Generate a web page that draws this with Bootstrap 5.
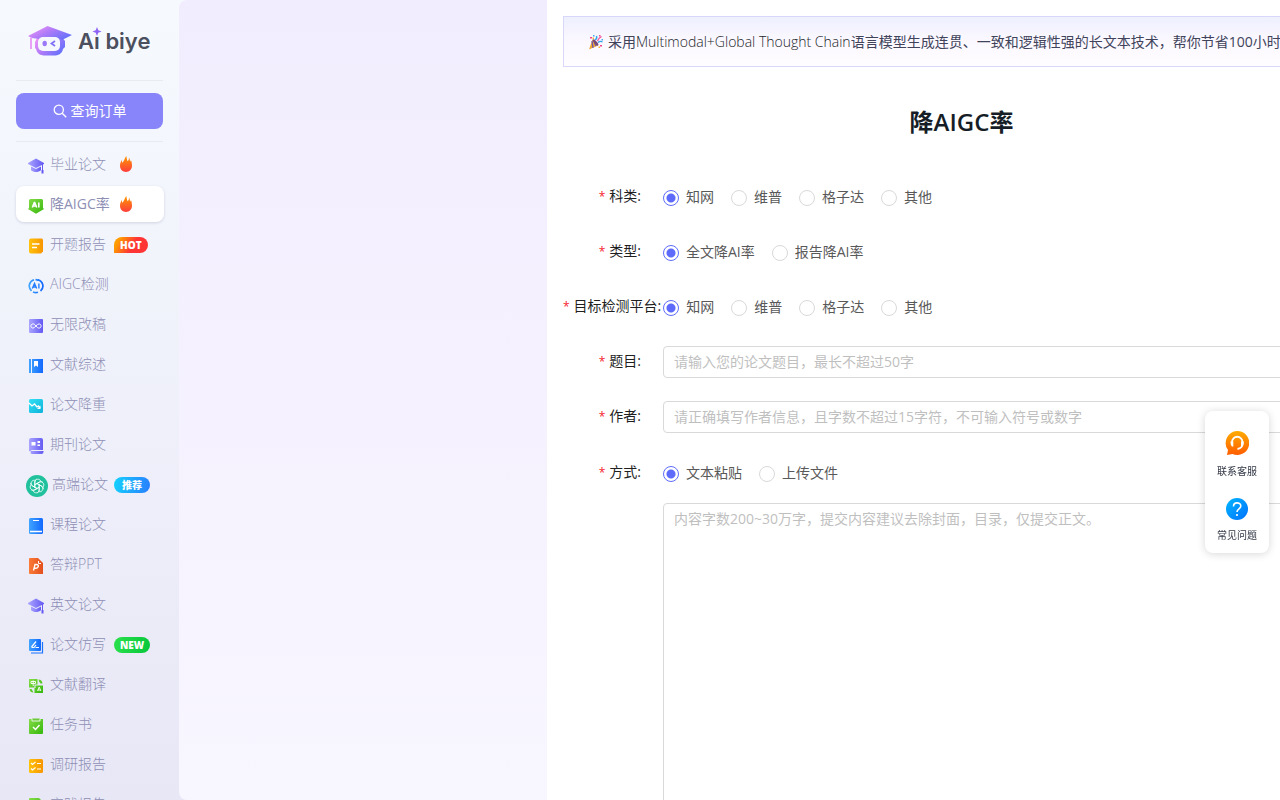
<!DOCTYPE html>
<html lang="zh-CN">
<head>
<meta charset="utf-8">
<meta name="viewport" content="width=device-width, initial-scale=1">
<title>Ai biye - 降AIGC率</title>
<link href="https://cdn.jsdelivr.net/npm/bootstrap@5.3.0/dist/css/bootstrap.min.css" rel="stylesheet">
<style>
  body { font-family: "Open Sans", "Noto Sans CJK SC", sans-serif; font-size: 14px; line-height: 22px; color: #1f1f1f; background: linear-gradient(#f6fafe, #e8e7f6); }
  .side-bar { width: 179px; padding: 0 16px; }
  .brand-row { height: 81px; padding: 1px 0 0 12px; border-bottom: 1px solid #e9ebf2; }
  .brand-name { margin-left: 6px; font: 600 22px/32px Inter, sans-serif; color: #4c4f5e; }
  .brand-star { position: absolute; left: 13px; top: 1px; }
  .order-box { padding: 12px 0; border-bottom: 1px solid #e7eaf2; }
  .order-btn { height: 36px; border-radius: 8px; background: #8884fa; color: #fff; font-size: 14px; line-height: 22px; }
  .order-btn:hover { background: #7975f0; color: #fff; }
  .side-link { height: 36px; margin-bottom: 4px; padding: 0 0 0 12px; border-radius: 8px; color: #8e8fb5; width: 148px; text-decoration: none; white-space: nowrap; font-weight: 300; }
  .side-link.active { background: #fff; box-shadow: 0 1px 3px rgba(60,60,110,.18); font-weight: 400; }
  .side-link > svg:first-child { margin-right: 6px; margin-top: 3px; flex: none; }
  .side-link > .gpt-icon:first-child { margin-left: -2px; margin-right: 4px; }
  .flame-icon { margin-left: 14px; }
  .active .flame-icon { margin-left: 10px; }
  .tag-pill { height: 16px; margin: 1px 0 0 8px; padding: 0 6px; border-radius: 8px; color: #fff; font-size: 10px; line-height: 16px; font-weight: 800; }
  .tag-hot { background: linear-gradient(120deg, #ff9d00 15%, #ff3535 55%); border-bottom-left-radius: 0; }
  .tag-rec { background: linear-gradient(100deg, #14d2ff, #287dff); padding: 0 8px; margin-left: 6px; }
  .tag-new { background: linear-gradient(100deg, #2be04c, #07c73b); }
  .blank-pane { flex: 1 0 368px; background: linear-gradient(#f2edfe, #f8f6ff); border-radius: 8px 0 0 8px; }
  .work-pane { flex: 0 0 829px; padding: 16px; background: #fff; }
  .notice-bar { height: 51px; border: 1px solid #d9d8fb; background: linear-gradient(#eef0fe, #fbf8ff 50%, #fffdff); color: #40435a; white-space: nowrap; padding-left: 24px; }
  .page-title { font-size: 24px; line-height: 32px; font-weight: 600; margin: 39px 0 43px; color: #161d26; }
  .form-line { display: flex; height: 32px; margin-bottom: 23px; }
  .form-line.tight { padding-top: 1px; margin-bottom: 15px; }
  .form-line.tall { height: auto; }
  .line-label { flex: 0 0 100px; padding-right: 22px; text-align: right; line-height: 30px; white-space: nowrap; }
  .line-label.wide { padding-right: 2px; }
  .line-label::before { content: "*"; color: #f5222d; margin-right: 4px; font-size: 12px; line-height: 1; }
  .line-label.plain::before { content: none; }
  .opt { display: flex; align-items: center; gap: 7px; margin-right: 17px; color: #595959; line-height: 30px; }
  .opt .form-check-input { width: 16px; height: 16px; margin: 2px 0 0; border: 1px solid #d9d9d9; background: #fff; flex: none; }
  .opt .form-check-input:checked { border-color: #5e6bfa; background: radial-gradient(circle, #5e6bfa 4px, #fff 5px); }
  .field { font-size: 14px; line-height: 22px; padding: 3px 10px 5px; border: 1px solid #d9d9d9; border-radius: 4px; height: 32px; }
  .field::placeholder { color: #bfbfbf; }
  textarea.field { height: 400px; resize: none; padding-top: 4px; }
  .help-dock { position: fixed; right: 11px; top: 411px; width: 64px; padding: 19px 0 7px; border-radius: 8px; background: #fff; box-shadow: 0 1px 8px rgba(0,0,0,.16); }
  .help-dock a { color: #333846; font-size: 10px; line-height: 22px; text-decoration: none; }
  .help-dock svg { margin-bottom: 4px; }
</style>
</head>
<body>
<svg width="0" height="0" class="position-absolute" aria-hidden="true">
  <defs>
    <linearGradient id="gp"><stop stop-color="#aaa5ff"/><stop offset="1" stop-color="#6459f2"/></linearGradient>
    <linearGradient id="gb"><stop stop-color="#40a4ff"/><stop offset="1" stop-color="#1268ff"/></linearGradient>
    <linearGradient id="gg" x2="1" y2="1"><stop stop-color="#86dc48"/><stop offset="1" stop-color="#35b80c"/></linearGradient>
    <linearGradient id="go"><stop stop-color="#ffc20c"/><stop offset="1" stop-color="#f79500"/></linearGradient>
    <linearGradient id="gc" x2="1" y2="1"><stop stop-color="#32e2f4"/><stop offset="1" stop-color="#0eb1da"/></linearGradient>
    <linearGradient id="gr"><stop stop-color="#fb7b36"/><stop offset="1" stop-color="#e2501e"/></linearGradient>
    <linearGradient id="gf" x2="0" y2="1"><stop stop-color="#ff9800"/><stop offset="1" stop-color="#ff3d3d"/></linearGradient>
    <linearGradient id="gl" x2="1" y2=".6"><stop stop-color="#ff9cf4"/><stop offset=".5" stop-color="#b37cf8"/><stop offset="1" stop-color="#6b72fb"/></linearGradient>
    <linearGradient id="gh" x2="0" y2="1"><stop stop-color="#ffab00"/><stop offset="1" stop-color="#ff5d00"/></linearGradient>
    <linearGradient id="gq" x2="1" y2="1"><stop stop-color="#00b7ff"/><stop offset="1" stop-color="#0070ff"/></linearGradient>
    <symbol id="cap" viewBox="0 0 16 16"><path d="M0 5 8 .5 16 5v1L8 10 0 6z" fill="url(#gp)"/><path d="M3 8.500v3.800c2.500 2.400 7.500 2.400 10 0V8.500L8 11z" fill="url(#gp)"/><path d="M14.500 6v7" stroke="#6459f2"/><path d="M13.500 12h2v3.500h-2z" fill="#6459f2"/></symbol>
    <symbol id="flame" viewBox="0 0 12 16"><path d="M6.200 0c.8 2 .4 3.300 1.400 5.200C8.700 4.500 9 3.300 9 1.500c.9 1.200.7 3 1.200 4 .5-.4.700-.9.700-1.500.8 1.800 1.100 3.600 1.100 5.600C12 13.700 9.300 16 6 16s-6-2.300-6-6.200C0 7.500.8 5.700 1.800 3.700c0 1.400.2 2.300.7 3C4 5.200 4.600 2.400 6.200 0z" fill="url(#gf)"/></symbol>
  </defs>
</svg>

<div class="d-flex vh-100 overflow-hidden">
  <aside class="side-bar flex-shrink-0 overflow-hidden">
    <div class="brand-row d-flex align-items-center">
      <svg width="44" height="30" viewBox="0 0 44 30" class="flex-shrink-0" aria-hidden="true">
        <path d="M9 12C12 8 32 8 35 12.500l2 2.500v6l-2 2c-1 5-5 6.500-9 6.500h-9c-5 0-8-2-9-6.500l-1-1v-6z" fill="url(#gl)"/>
        <path d="M0 10 19.500 0 44 9l-10 5c-7-4-16-4-23-1L4 12z" fill="url(#gl)"/>
        <path d="M3 11.500V23" stroke="#e9a0f6" stroke-width="2"/>
        <rect x="10" y="11" width="22" height="14" rx="5" fill="#f5f9fe"/>
        <ellipse cx="16.700" cy="17.500" rx="2.200" ry="2.700" fill="#9b78f7"/><path d="m27 15-3.500 2.500L27 20" fill="none" stroke="#8173f8" stroke-width="1.800"/>
      </svg>
      <div class="brand-name position-relative">Ai biye
        <svg class="brand-star" width="12" height="11" viewBox="-6 -6 12 12" aria-hidden="true"><rect x="-3" y="-2" width="7" height="8" fill="#f5f9fe"/><path d="m0-5 1.400 3.600L5 0 1.400 1.400 0 5-1.400 1.400-5 0l3.600-1.400z" fill="#9065f5"/></svg>
      </div>
    </div>
    <div class="order-box">
      <button type="button" class="btn order-btn border-0 w-100 p-0 d-flex align-items-center justify-content-center">
        <svg class="me-1" width="14" height="14" viewBox="0 0 14 14" fill="none" stroke="#fff" stroke-width="1.300" aria-hidden="true"><circle cx="5.800" cy="5.800" r="4.600"/><path d="m9.200 9.200 4 4"/></svg>查询订单
      </button>
    </div>
    <nav class="nav flex-column flex-nowrap pt-1">
      <a href="#" class="side-link d-flex align-items-center"><svg width="16" height="16"><use href="#cap"/></svg>毕业论文<svg class="flame-icon" width="12" height="16"><use href="#flame"/></svg></a>
      <a href="#" class="side-link active d-flex align-items-center" aria-current="page"><svg width="16" height="16" viewBox="0 0 16 16"><path d="M1 2.500Q1 1 2.500 1h11Q15 1 15 2.500V10l1 1-8 4.800L0 11l1-1z" fill="url(#gg)"/><path d="m4.300 9.500 2-5h.4l2 5M5 8h3M10.800 4.500v5" fill="none" stroke="#fff" stroke-width="1.600"/></svg>降AIGC率<svg class="flame-icon" width="12" height="16"><use href="#flame"/></svg></a>
      <a href="#" class="side-link d-flex align-items-center"><svg width="16" height="16" viewBox="0 0 16 16"><path d="M3 .500h11l1 1v12l-2 2H3q-2 0-2-2v-11q0-2 2-2z" fill="url(#go)"/><path d="M4 6h7.500M4 9.500h5" stroke="#fff" stroke-width="1.300"/></svg>开题报告<span class="tag-pill tag-hot">HOT</span></a>
      <a href="#" class="side-link d-flex align-items-center"><svg width="16" height="16" viewBox="0 0 16 16" fill="none" stroke="url(#gb)"><path d="M6 1.800a6.400 6.400 0 0 0-2.500 11M5 14a6.400 6.400 0 0 0 5 .300M10 1.800A6.400 6.400 0 0 1 12.500 13M10.500 2.500a6 6 0 0 0-3-.800" stroke-width="1.700"/><path d="m4.300 10.500 2.200-5 2.200 5M5 9h3M10.900 5.500v5" stroke="#247eff" stroke-width="1.400"/></svg>AIGC检测</a>
      <a href="#" class="side-link d-flex align-items-center"><svg width="16" height="16" viewBox="0 0 16 16"><rect x="1" y="1" width="14" height="14" rx="1" fill="url(#gp)"/><path d="M8 8C6.500 6 5.800 5.900 5 5.900c-2.800 0-2.800 4.200 0 4.200C6.800 10.100 9 5.900 11 5.900c2.800 0 2.800 4.200 0 4.200-1 0-1.800-.600-3-2.100z" fill="none" stroke="#fff"/></svg>无限改稿</a>
      <a href="#" class="side-link d-flex align-items-center"><svg width="16" height="16" viewBox="0 0 16 16"><path d="M1 1h2v14H1zM4 1h11v14H4z" fill="url(#gb)"/><path d="M6 3h4v6L8 7.500 6 9z" fill="#fff"/></svg>文献综述</a>
      <a href="#" class="side-link d-flex align-items-center"><svg width="16" height="16" viewBox="0 0 16 16"><rect x="1" y="1" width="14" height="14" rx="1.500" fill="url(#gc)"/><path d="m1 5 3 3 2.500-2L9 9l1.500-1 1.500 2" fill="none" stroke="#fff" stroke-width="1.300"/><path d="M12.500 7.500v3.500H9z" fill="#fff"/></svg>论文降重</a>
      <a href="#" class="side-link d-flex align-items-center"><svg width="16" height="16" viewBox="0 0 16 16"><path d="M3 0h10q2 0 2 2v10H4q-1.500 0-1.500 1.500L1 13V2q0-2 2-2zM3 13h12.500v1q0 2-2 2H4q-2 0-1-3z" fill="url(#gp)"/><path d="M3.500 4h4v3.500h-4zM9.500 3H12v2H9.500zM9.500 6.500H12V8H9.500z" fill="#fff"/></svg>期刊论文</a>
      <a href="#" class="side-link d-flex align-items-center"><svg class="gpt-icon" width="22" height="22" viewBox="0 0 22 22"><circle cx="11" cy="11" r="11" fill="#20c19c"/><g fill="none" stroke="#fff" stroke-width=".8"><path id="petal" d="M8.800 12.300V7.300c0-3.600 4.600-4.200 6-1.200M8.800 9.800l4.600-2.700c1-.6 2.200-.6 3.200 0"/><use href="#petal" transform="rotate(60 11 11)"/><use href="#petal" transform="rotate(120 11 11)"/><use href="#petal" transform="rotate(180 11 11)"/><use href="#petal" transform="rotate(240 11 11)"/><use href="#petal" transform="rotate(300 11 11)"/></g></svg>高端论文<span class="tag-pill tag-rec">推荐</span></a>
      <a href="#" class="side-link d-flex align-items-center"><svg width="16" height="16" viewBox="0 0 16 16"><rect x="1" width="14" height="16" rx="1.500" fill="url(#gb)"/><path d="M5 2.500h6" stroke="#fff"/><path d="M2 13.500h12" stroke="#fff" stroke-width="1.500"/></svg>课程论文</a>
      <a href="#" class="side-link d-flex align-items-center"><svg width="16" height="16" viewBox="0 0 16 16"><path d="M2 0h8l5 5v11H2q-1 0-1-1V1q0-1 1-1z" fill="url(#gr)"/><path d="M10.500 3v2.500H13" fill="none" stroke="#fff"/><path d="M5.500 12.500 7 6.500h1.500c3 0 2 3.800-.500 3.800H6.500" fill="none" stroke="#fff" stroke-width="1.400"/></svg>答辩PPT</a>
      <a href="#" class="side-link d-flex align-items-center"><svg width="16" height="16"><use href="#cap"/></svg>英文论文</a>
      <a href="#" class="side-link d-flex align-items-center"><svg width="16" height="16" viewBox="0 0 16 16"><rect x="1" y="1" width="12" height="12" rx="1" fill="url(#gb)"/><path d="M14.500 4v11H3" fill="none" stroke="#1973ff" stroke-width="1.200"/><path d="m3.500 9 4.500-5.500M3.500 9.500h2.500L8 7M7.500 9.500h3.500" fill="none" stroke="#fff" stroke-width="1.200"/></svg>论文仿写<span class="tag-pill tag-new">NEW</span></a>
      <a href="#" class="side-link d-flex align-items-center"><svg width="16" height="16" viewBox="0 0 16 16"><path d="M1 1h8.500v5.500H6.500v3H1zM7.500 7.500H15V15H6.500v-5h1zM10.500 1.500Q14 1.500 14.500 5.500h-2L11 3.500zM1.500 11h2l2 3.500Q2 14.500 1.500 11z" fill="url(#gg)"/><path d="M3 3.500h4.500v2H3zM5.200 2.500v5.500M9.500 13l1.700-4 1.700 4M10 12h2.500" fill="none" stroke="#fff" stroke-width=".9"/></svg>文献翻译</a>
      <a href="#" class="side-link d-flex align-items-center"><svg width="16" height="16" viewBox="0 0 16 16"><path d="M1 1h14v14q0 1-1 1H2q-1 0-1-1z" fill="url(#gg)"/><path d="M4 .500V3h8V.500" stroke="#e8f8e0" fill="#6ac83a"/><path d="m5 9 2.500 2.500L11.500 7" fill="none" stroke="#fff" stroke-width="1.500"/></svg>任务书</a>
      <a href="#" class="side-link d-flex align-items-center"><svg width="16" height="16" viewBox="0 0 16 16"><rect x="1" y="1" width="14" height="14" rx="1.500" fill="url(#go)"/><path d="m3 5 1.500 1.500L7.500 4M3 10.500 4.500 12l3-2.500M9 5.500h4M9 11h4" fill="none" stroke="#fff" stroke-width="1.200"/></svg>调研报告</a>
      <a href="#" class="side-link d-flex align-items-center"><svg width="16" height="16" viewBox="0 0 16 16"><path d="M2 0h9l4 4v12H2q-1 0-1-1V1q0-1 1-1z" fill="url(#gg)"/></svg>实践报告</a>
    </nav>
  </aside>

  <div class="blank-pane"></div>

  <main class="work-pane overflow-hidden">
    <div class="notice-bar d-flex align-items-center">
      <svg class="me-1 flex-shrink-0" width="16" height="16" viewBox="0 0 16 16" aria-hidden="true">
        <path d="m4.500 5.500 5.500 6-9 4z" fill="#f0a830"/><path d="m4 7 1 7M6.500 8.500 8 12" stroke="#6a55b8" stroke-width="1.300"/><ellipse cx="7.500" cy="8.500" rx="1.400" ry="4" transform="rotate(-42 7.500 8.500)" fill="#7a4a74"/>
        <path d="M7 6q2.500-1.500 1.500-4M10 8.500q2-2 4.500-.500" fill="none" stroke="#31a5ee" stroke-width="1.400"/><path d="M9.500 7q.5-2.500 4-4.500" fill="none" stroke="#f3559c" stroke-width="1.400"/>
        <path d="M2 3h2v1.500H2zM11 1h1.500v1.500H11zM12 11h2v1.500h-2z" fill="#f0478d"/><path d="M5 1h1.500v1.500H5zM13.500 5H15v1.500h-1.500z" fill="#47a9ef"/><path d="M10.500 12.500H12V14h-1.500zM4.500 3.500H6V5H4.500z" fill="#f9b62c"/>
      </svg>
      <span>采用<span class="fw-light text-dark">Multimodal+Global Thought Chain</span>语言模型生成连贯、一致和逻辑性强的长文本技术，帮你节省100小时写作时间</span>
    </div>
    <h1 class="page-title text-center">降AIGC率</h1>
    <form>
      <div class="form-line" role="radiogroup" aria-labelledby="l1">
        <span class="line-label" id="l1">科类:</span>
        <label class="opt"><input class="form-check-input" type="radio" name="subject" checked>知网</label>
        <label class="opt"><input class="form-check-input" type="radio" name="subject">维普</label>
        <label class="opt"><input class="form-check-input" type="radio" name="subject">格子达</label>
        <label class="opt"><input class="form-check-input" type="radio" name="subject">其他</label>
      </div>
      <div class="form-line" role="radiogroup" aria-labelledby="l2">
        <span class="line-label" id="l2">类型:</span>
        <label class="opt"><input class="form-check-input" type="radio" name="kind" checked>全文降AI率</label>
        <label class="opt"><input class="form-check-input" type="radio" name="kind">报告降AI率</label>
      </div>
      <div class="form-line" role="radiogroup" aria-labelledby="l3">
        <span class="line-label wide" id="l3">目标检测平台:</span>
        <label class="opt"><input class="form-check-input" type="radio" name="platform" checked>知网</label>
        <label class="opt"><input class="form-check-input" type="radio" name="platform">维普</label>
        <label class="opt"><input class="form-check-input" type="radio" name="platform">格子达</label>
        <label class="opt"><input class="form-check-input" type="radio" name="platform">其他</label>
      </div>
      <div class="form-line">
        <label class="line-label" for="topic">题目:</label>
        <input type="text" class="form-control field" id="topic" placeholder="请输入您的论文题目，最长不超过50字">
      </div>
      <div class="form-line">
        <label class="line-label" for="author">作者:</label>
        <input type="text" class="form-control field" id="author" placeholder="请正确填写作者信息，且字数不超过15字符，不可输入符号或数字">
      </div>
      <div class="form-line tight" role="radiogroup" aria-labelledby="l4">
        <span class="line-label" id="l4">方式:</span>
        <label class="opt"><input class="form-check-input" type="radio" name="mode" checked>文本粘贴</label>
        <label class="opt"><input class="form-check-input" type="radio" name="mode">上传文件</label>
      </div>
      <div class="form-line tall">
        <span class="line-label plain"></span>
        <textarea class="form-control field" aria-label="内容" placeholder="内容字数200~30万字，提交内容建议去除封面，目录，仅提交正文。"></textarea>
      </div>
    </form>
  </main>
</div>

<div class="help-dock d-flex flex-column align-items-center gap-3">
  <a href="#" class="d-flex flex-column align-items-center"><svg width="24" height="26" viewBox="0 0 24 26" aria-hidden="true"><path d="M12 1a12 12 0 1 1-4.500 23L2 25l1-5A12 12 0 0 1 12 1z" fill="url(#gh)"/><path d="M7 14v-2a5.200 5.200 0 0 1 10.500 0v2q0 4-5 5" fill="none" stroke="#fff" stroke-width="1.800"/><path d="M5.500 11.500h2.800v5H7q-1.500-1-1.500-5zM16 11.500h2.800q0 4-1.500 5H16z" fill="#fff"/></svg>联系客服</a>
  <a href="#" class="d-flex flex-column align-items-center"><svg width="22" height="22" viewBox="0 0 22 22" aria-hidden="true"><circle cx="11" cy="11" r="11" fill="url(#gq)"/><path d="M7.500 8.500c0-5 7.300-4.500 7.300-.500 0 2.800-3.800 2.800-3.800 6" fill="none" stroke="#fff" stroke-width="1.600"/><circle cx="11" cy="17" r="1.100" fill="#fff"/></svg>常见问题</a>
</div>
<script src="https://cdn.jsdelivr.net/npm/bootstrap@5.3.0/dist/js/bootstrap.bundle.min.js"></script>
</body>
</html>
